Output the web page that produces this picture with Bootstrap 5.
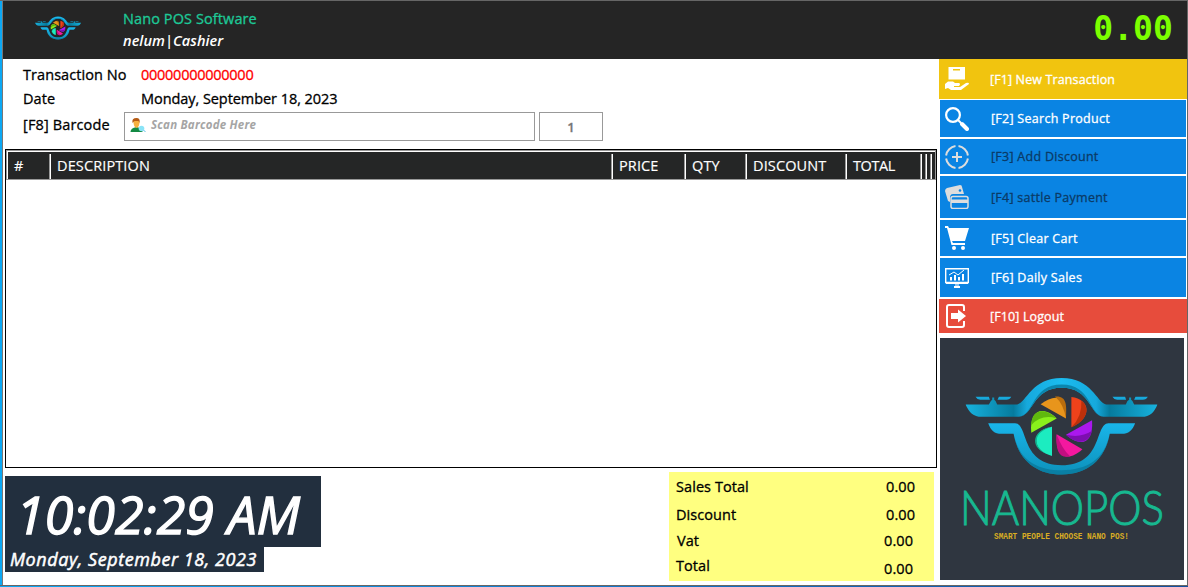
<!DOCTYPE html>
<html lang="en">
<head>
<meta charset="utf-8">
<meta name="viewport" content="width=device-width, initial-scale=1">
<title>Nano POS Software</title>
<link href="https://cdn.jsdelivr.net/npm/bootstrap@5.3.0/dist/css/bootstrap.min.css" rel="stylesheet">
<style>
body{width:1188px;height:587px;overflow:hidden;font-family:"Open Sans","Noto Sans",sans-serif;font-size:14.5px;font-weight:400;line-height:20px;letter-spacing:.07px;color:#000;background:#fff;white-space:nowrap;-webkit-text-stroke:.3px}
.window{height:586px;border:1px solid #666;border-left:0;box-shadow:inset 2px 0 #0ca8f4,inset 3px 0 #777;padding-left:3px}
.desktop-edge{height:1px;background:linear-gradient(90deg,#0ca8f4,#1679cc 50%,#1450a0)}
.topbar{height:58px;background:#252525}
.brand-block{padding-top:7px;margin-left:-1px}
.brand-name{color:#1dc997;height:22px;line-height:22px;letter-spacing:.1px}
.user-name{padding-top:1px;font-weight:600;font-style:italic;-webkit-text-stroke:0}
.amount{font:bold 33px/40px "DejaVu Sans Mono",monospace;color:#7cff00;margin:8px 14px 0 0;-webkit-text-stroke:0}
.info{padding:6px 0 0 20px;height:90px}
.lbl{width:118px}
.trans-no{color:red;letter-spacing:-.26px}
.today{letter-spacing:-.06px}
.scan{width:411px;height:29px;border:1px solid #999}
.qty-box{width:64px;height:29px;border:1px solid #999;color:#777;font-size:13px;font-weight:600}
.hint{color:#a5a5a5;font-size:11.5px;font-weight:700;font-style:italic;letter-spacing:.22px;padding-bottom:3px;-webkit-text-stroke:0}
.grid-box{width:932px;height:319px;margin-left:2px;border:1px solid #000}
.grid-head{height:30px;border:1px solid #999;background:#252626;color:#fff;box-shadow:inset 0 1px #fff,inset 1px 0 #fff;padding-top:3px;line-height:23px;letter-spacing:.12px;-webkit-text-stroke:.15px}
.grid-head div{height:25px;border-left:1px solid #999;box-shadow:inset 1px 0 #fff;padding-left:7px}
.clock{width:316px;height:71px;background:#222f3e;color:#fff;font-size:52px;line-height:75px;font-style:italic;letter-spacing:0;padding-left:11px;-webkit-text-stroke:1.3px}
.clock-date{width:259px;height:25px;background:#222f3e;color:#fff;font-size:18px;line-height:25px;font-style:italic;letter-spacing:.56px;padding-left:5px;-webkit-text-stroke:.5px}
.totals{width:265px;height:109px;background:#ffff80}
.side{width:248px}
.act{height:var(--h);margin:0 1px var(--g,2px);background:#0a84e3;color:#fff;font-size:12.5px;letter-spacing:.27px;border:0;border-radius:0;padding:0 0 0 5px}
.act svg{width:24px;height:24px;margin-right:22px}
.act span{padding-top:2px}
.act.off{color:#0a3a66}
.act.off svg{color:#ddd}
.act.wide{margin-left:0;margin-right:0;padding-left:6px;letter-spacing:.12px}
.act.wide svg{margin-right:21px}
.logo-box{width:244px;height:242px;margin:5px 0 0 1px;background:#2f3640}
</style>
</head>
<body>
<svg width="0" height="0" class="position-absolute">
<defs>
<linearGradient id="wing" x1="0" x2="1"><stop offset="0" stop-color="#17b2de"/><stop offset=".25" stop-color="#067b9e"/><stop offset=".32" stop-color="#16a9dc"/><stop offset=".5" stop-color="#1bbcf0"/><stop offset=".68" stop-color="#16a9dc"/><stop offset=".75" stop-color="#067b9e"/><stop offset="1" stop-color="#17b2de"/></linearGradient>
<linearGradient id="bowl" x1="0" x2="0" y1="0" y2="1"><stop offset="0" stop-color="#19b5ea"/><stop offset="1" stop-color="#0d92bb"/></linearGradient>
</defs>
<symbol id="logo" viewBox="32 39 575 290">
<path fill="url(#wing)" d="M32 118H102L108 108 112 104V97H118V104L122 108 127 118H187C215 112 230 39 320 39S425 112 453 118H512L517 108 522 104V97H528V104L532 108 537 118H607C597 142 584 155 560 155H445C405 153 407 68 320 68S235 153 192 155H80C56 155 43 142 32 118Z"/>
<path fill="#0b86ae" d="M192 155C240 146 230 58 320 58S400 146 445 155C405 153 407 68 320 68S235 153 192 155Z"/>
<path fill="#17a9dc" d="M62 95H102L105 104H76Q66 103 62 95ZM128 104 132 95H169Q165 104 154 104ZM472 95H510L513 104H486Q476 103 472 95ZM537 104 541 95H578Q574 104 563 104Z"/>
<path fill="url(#bowl)" d="M100 174H180C222 176 195 300 320 300S418 176 460 174H540C532 196 520 206 500 206H464C450 284 396 328 320 328S190 284 176 206H140C118 206 108 196 100 174Z"/>
<path fill="#087698" opacity=".7" d="M176 206C192 284 245 315 320 315S448 284 464 206C450 284 396 328 320 328S190 284 176 206Z"/>
<path fill="#e8951c" d="M257 117C300 85 336 88 333 160Z"/><path fill="#b96d0d" d="M300 94C336 91 335 120 333 160Q325 115 300 94Z"/>
<path fill="#ee421b" d="M349 96C405 102 414 158 349 186Z"/><path fill="#bd300b" d="M379 107C405 125 399 168 349 186Q382 155 379 107Z"/>
<path fill="#aa18ee" d="M411 165C416 233 379 249 333 209Z"/><path fill="#7d0eb0" d="M411 197C401 240 360 236 333 209Q378 219 411 197Z"/>
<path fill="#f4189f" d="M305 207 382 252C345 287 300 285 305 207Z"/><path fill="#c10f80" d="M305 207Q321 251 345 273C315 280 301 260 305 207Z"/>
<path fill="#1cecc0" d="M291 185V272C233 260 223 197 291 185Z"/><path fill="#12b38f" d="M291 185C235 201 233 240 270 264 225 244 231 195 291 185Z"/>
<path fill="#8af01c" d="M229 203C222 138 261 118 305 160Z"/><path fill="#60b80e" d="M229 180C229 132 268 125 305 160Q260 146 229 180Z"/>
</symbol>
</svg>
<div class="window d-flex flex-column">
<header class="topbar d-flex align-items-start">
<svg width="46" height="24" style="margin:15px 43px 0 32px"><use href="#logo"/></svg>
<div class="brand-block flex-grow-1 text-white"><div class="brand-name">Nano POS Software</div><div class="user-name">nelum|Cashier</div></div>
<div class="amount">0.00</div>
</header>
<div class="d-flex flex-grow-1">
<main class="d-flex flex-column" style="width:936px">
<section class="info">
<div class="d-flex" style="height:24px"><div class="lbl">Transaction No</div><span class="trans-no">00000000000000</span></div>
<div class="d-flex" style="height:23px"><div class="lbl">Date</div><span class="today">Monday, September 18, 2023</span></div>
<div class="d-flex"><div style="width:101px;padding-top:3px;letter-spacing:.14px">[F8] Barcode</div>
<div class="scan d-flex align-items-center"><svg width="16" height="16" style="margin:0 5px 3px 5px" viewBox="0 0 15 16"><path fill="#138a43" d="M0 15Q0 11 6 10 12 11 12 15Z"/><path fill="#f6b040" d="M3 5Q3 10 6 11 9 10 9 5L8 3H4Z"/><path fill="#b55b16" d="M2 6Q1 1 6 1 10 1 9 6L8 4H4Z"/><circle cx="11" cy="11.500" r="2.800" fill="#8be4f7"/><path stroke="#59bfe9" d="m13 13 2 2"/></svg><span class="hint">Scan Barcode Here</span></div>
<div class="qty-box ms-1 d-flex align-items-center justify-content-center">1</div></div>
</section>
<section class="grid-box"><div class="grid-head d-flex">
<span style="width:42px;padding-left:7px">#</span><div style="width:562px">DESCRIPTION</div><div style="width:73px">PRICE</div><div style="width:61px">QTY</div><div style="width:100px">DISCOUNT</div><div style="width:75px;letter-spacing:-.4px">TOTAL</div><div class="p-0" style="width:5px"></div><div class="p-0" style="width:5px"></div><div class="p-0" style="width:5px"></div></div>
</section>
<footer class="d-flex justify-content-between" style="padding:4px 5px 0 2px">
<div class="pt-1"><div class="clock">10:02:29 AM</div><div class="clock-date">Monday, September 18, 2023</div></div>
<div class="totals">
<div class="d-flex justify-content-between" style="padding:5px 19px 0 7px;height:33px"><span>Sales Total</span><span>0.00</span></div>
<div class="d-flex justify-content-between" style="padding:0 19px 0 7px;height:26px"><span>Discount</span><span>0.00</span></div>
<div class="d-flex justify-content-between" style="padding:0 21px 0 8px;height:25px"><span>Vat</span><span>0.00</span></div>
<div class="d-flex justify-content-between" style="padding:0 21px 0 7px"><span>Total</span><span style="padding-top:3px">0.00</span></div>
</div>
</footer>
</main>
<aside class="side d-flex flex-column">
<button class="act wide btn d-flex align-items-center" style="--h:40px;--g:1px;background:#f1c40f"><svg viewBox="0 0 24 24" fill="currentColor"><path fill-rule="evenodd" d="M3.500 0H20V12.500H3.500ZM8 2V3.500H15V2Z"/><path d="M0 17 3 14.500H8L10 16H14Q16 17 14 19H9V20H15L21 16Q24 15 24 17L16 23H6L3 21 0 22Z"/></svg><span>[F1] New Transaction</span></button>
<button class="act btn d-flex align-items-center" style="--h:37px"><svg viewBox="0 0 24 24" fill="none" stroke="currentColor"><circle cx="8" cy="8" r="6.900" stroke-width="2.200"/><path stroke-width="2" d="m13 13 3 3"/><path stroke-width="4" stroke-linecap="round" d="m17 17 5 5"/></svg><span>[F2] Search Product</span></button>
<button class="act off btn d-flex align-items-center" style="--h:35px"><svg viewBox="0 0 24 24" fill="none" stroke="currentColor" stroke-width="2"><path d="M10.500 1.100A11 11 0 0 0 1.100 10.500M13.500 1.100A11 11 0 0 1 22.900 10.500M1.100 13.500A11 11 0 0 0 10.500 22.900M22.900 13.500A11 11 0 0 1 13.500 22.900M12 7V17M7 12H17"/></svg><span>[F3] Add Discount</span></button>
<button class="act off btn d-flex align-items-center" style="--h:42px"><svg viewBox="0 0 24 24" fill="currentColor"><path d="M0 6Q0 4 2 3L15 0Q17 0 17 2L19 9H8Q5 9 5 13V17L3 16Z"/><circle cx="15" cy="5.500" r="1.300" fill="#0a84e3"/><rect x="6" y="11.500" width="17" height="12" rx="2" fill="#0a84e3" stroke="currentColor" stroke-width="1.500"/><path d="M6 14.500H23V18H6Z"/></svg><span>[F4] sattle Payment</span></button>
<button class="act btn d-flex align-items-center" style="--h:36px"><svg viewBox="0 0 24 24" fill="currentColor"><path d="M0 0H3L4 2H24L20 15H7L8 17H20V19H6.500L2 2H0Z"/><circle cx="9" cy="22" r="2"/><circle cx="18" cy="22" r="2"/></svg><span>[F5] Clear Cart</span></button>
<button class="act btn d-flex align-items-center" style="--h:39px"><svg viewBox="0 0 24 24" fill="none" stroke="currentColor"><path stroke-width="1.400" d="M.7 2.700H23.300V16.500H.7Z"/><path stroke-width="2" d="M1 17H23M9 21H15"/><path stroke-width="2" d="M6 14.500V11M10 14.500V9M14 14.500V11M18 14.500V8"/><path d="m4 9 5-3 4 3 6-5"/><path d="M10 19H14"/></svg><span>[F6] Daily Sales</span></button>
<button class="act wide btn d-flex align-items-center" style="--h:34px;--g:0px;background:#e74c3c"><svg viewBox="0 0 24 24" fill="none" stroke="currentColor"><path stroke-width="2" d="M19 7V3Q19 1 17 1H4Q2 1 2 3V21Q2 23 4 23H17Q19 23 19 21V17"/><path fill="currentColor" stroke="none" d="M6 9H13V5.500L21 12 13 18.500V15H6Z"/></svg><span>[F10] Logout</span></button>
<div class="logo-box"><svg width="244" height="242" viewBox="0 0 244 242"><use href="#logo" x="25.500" y="40" width="192" height="97"/>
<text x="20" y="187" font-family="Lato, sans-serif" font-weight="300" font-size="47.500" letter-spacing="0" fill="#17b890" stroke="#17b890" style="-webkit-text-stroke:.7px #17b890" textLength="204" lengthAdjust="spacingAndGlyphs">NANOPOS</text>
<text x="54" y="200.500" font-family="Liberation Mono, monospace" font-weight="700" font-size="9" letter-spacing="0" fill="#d9ad23" style="-webkit-text-stroke:0" textLength="135" lengthAdjust="spacingAndGlyphs">SMART PEOPLE CHOOSE NANO POS!</text></svg></div>
</aside>
</div>
</div>
<div class="desktop-edge"></div>
<script src="https://cdn.jsdelivr.net/npm/bootstrap@5.3.0/dist/js/bootstrap.bundle.min.js"></script>
</body>
</html>
